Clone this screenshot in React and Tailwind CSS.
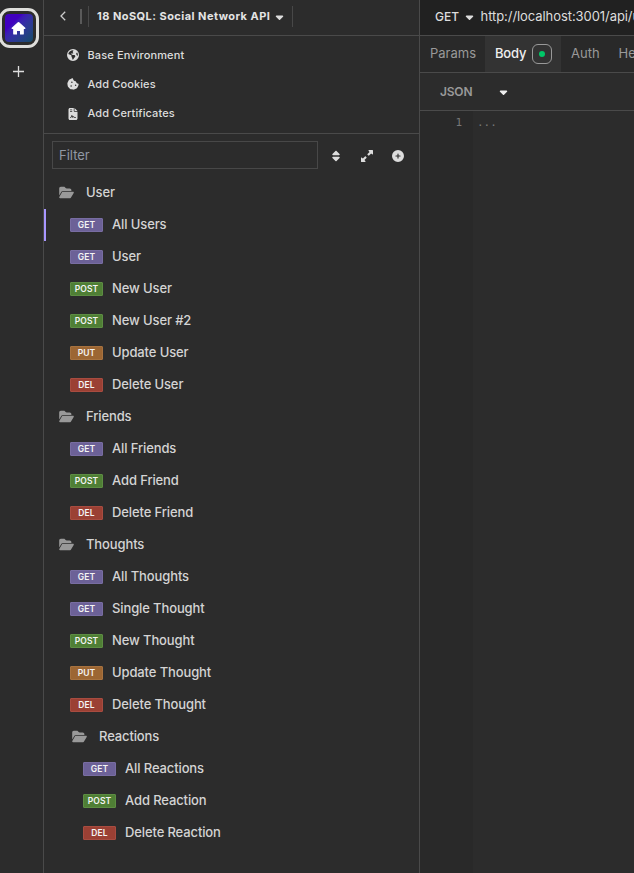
import React from "react";
import {
  FaCaretDown,
  FaCirclePlus,
  FaCookieBite,
  FaEarthAmericas,
  FaFileContract,
  FaFolderOpen,
  FaSort,
  FaUpRightAndDownLeftFromCenter,
} from "react-icons/fa6";

const METHODS = {
  GET: "bg-[#6c6197] border-[#786da2]",
  POST: "bg-[#4f7f35] border-[#5d8d43]",
  PUT: "bg-[#9c6633] border-[#a7723f]",
  DEL: "bg-[#9b4034] border-[#a84c40]",
};

const ITEMS = [
  { folder: "User" },
  { method: "GET", name: "All Users", active: true },
  { method: "GET", name: "User" },
  { method: "POST", name: "New User" },
  { method: "POST", name: "New User #2" },
  { method: "PUT", name: "Update User" },
  { method: "DEL", name: "Delete User" },
  { folder: "Friends" },
  { method: "GET", name: "All Friends" },
  { method: "POST", name: "Add Friend" },
  { method: "DEL", name: "Delete Friend" },
  { folder: "Thoughts" },
  { method: "GET", name: "All Thoughts" },
  { method: "GET", name: "Single Thought" },
  { method: "POST", name: "New Thought" },
  { method: "PUT", name: "Update Thought" },
  { method: "DEL", name: "Delete Thought" },
  { folder: "Reactions", nested: true },
  { method: "GET", name: "All Reactions", nested: true },
  { method: "POST", name: "Add Reaction", nested: true },
  { method: "DEL", name: "Delete Reaction", nested: true },
];

function Row({ item }) {
  const indent = item.nested ? "pl-[13px]" : "pl-0";
  return (
    <li
      className={`flex h-8 items-center border-l-2 ${indent} ${
        item.active ? "border-[#a896ff]" : "border-transparent"
      }`}
    >
      {item.folder ? (
        <>
          <FaFolderOpen className="mb-px ml-[13px] h-[13px] w-[15px] text-[#999]" />
          <span className="ml-3">{item.folder}</span>
        </>
      ) : (
        <>
          <span
            className={`ml-6 flex h-[14px] w-[33px] items-center justify-center rounded-[1px] border text-[8.5px] font-semibold tracking-[0.1px] text-[#f4f4f4] ${METHODS[item.method]}`}
          >
            {item.method}
          </span>
          <span className="ml-[9px]">{item.name}</span>
        </>
      )}
    </li>
  );
}

function Rail() {
  return (
    <nav className="flex w-11 shrink-0 flex-col items-start border-r border-[#4a4a4a]">
      <div className="-ml-px mt-2 flex h-10 w-10 items-center justify-center rounded-[11px] border-[3px] border-[#dededb]">
        <div className="mr-px flex h-7 w-7 items-center justify-center rounded-[4px] bg-linear-to-br from-[#4000bf] from-30% to-[#154b66]">
          <svg viewBox="0 0 16 16" className="mr-px h-[15px] w-[15px]" fill="#fff">
            <path d="M7.3 1.4a1 1 0 0 1 1.4 0l6.5 5.8c.6.5.2 1.3-.5 1.3h-1v5c0 .6-.4 1-1 1H9.6v-3.8H6.4v3.8H3.3c-.6 0-1-.4-1-1v-5h-1C.6 8.500.2 7.700.8 7.200z" />
          </svg>
        </div>
      </div>
      <svg viewBox="0 0 11 11" className="ml-[13px] mt-[18px] h-[11px] w-[11px]" stroke="#ddd" strokeWidth="1.3">
        <path d="M5.500 0v11M0 5.500h11" />
      </svg>
    </nav>
  );
}

function Sidebar() {
  return (
    <aside className="flex w-[376px] shrink-0 flex-col border-r border-[#4a4a4a]">
      <header className="flex h-9 shrink-0 items-center border-b border-[#4a4a4a] pb-[3px]">
        <svg viewBox="0 0 6 10" className="ml-4 h-[10px] w-[6px]" fill="none" stroke="#ccc" strokeWidth="1.3">
          <path d="M5.200.8 1 5l4.200 4.200" />
        </svg>
        <span className="ml-[14px] h-[15px] w-[2px] bg-[#5a5a5a]" />
        <div className="ml-[6px] flex h-[21px] items-center border-x border-[#484848] pl-2 pr-[8px]">
          <span className="w-[173px] whitespace-nowrap text-[11px] font-bold tracking-[0.46px] text-[#e4e4e4]">
            18 NoSQL: Social Network API
          </span>
          <FaCaretDown className="ml-[5px] mt-0.5 h-3 w-[9px]" />
        </div>
      </header>
      <section className="flex h-[98px] shrink-0 flex-col border-b border-[#4a4a4a] pt-[5px] text-[11px] font-medium tracking-[0.12px]">
        <div className="flex h-[29px] items-center pl-[23px]">
          <FaEarthAmericas className="mb-px h-3 w-3" />
          <span className="ml-[8.500px]">Base Environment</span>
        </div>
        <div className="flex h-[29px] items-center pl-[23px]">
          <FaCookieBite className="mb-px h-3 w-3" />
          <span className="ml-[8.500px]">Add Cookies</span>
        </div>
        <div className="flex h-[29px] items-center pl-[23px]">
          <FaFileContract className="h-3 w-3" />
          <span className="ml-[8.500px]">Add Certificates</span>
        </div>
      </section>
      <div className="flex h-[43px] shrink-0 items-center pb-px pl-2">
        <div className="flex h-7 w-[266px] items-center border border-[#484848] pl-[6px] pt-[2px] text-[13px] text-[#9198a4]">
          Filter
        </div>
        <FaSort className="ml-[11.500px] mt-px h-3 w-3" />
        <FaUpRightAndDownLeftFromCenter className="ml-[19px] mt-px h-3 w-3" />
        <FaCirclePlus className="ml-[19px] mt-px h-3 w-3" />
      </div>
      <ul className="text-[13px] font-medium tracking-[-0.12px] text-[#d4d4d4]">
        {ITEMS.map((item, i) => (
          <Row key={i} item={item} />
        ))}
      </ul>
    </aside>
  );
}

function RequestPane() {
  return (
    <main className="flex min-w-0 flex-1 flex-col overflow-hidden whitespace-nowrap text-[13px]">
      <div className="flex h-9 shrink-0 items-center border-b border-[#4a4a4a] bg-[#212121] pb-[2px] pl-[15px]">
        <span className="w-[25px] text-[12px] font-medium">GET</span>
        <FaCaretDown className="ml-[6px] h-3 w-[9px] shrink-0" />
        <span className="ml-[6.500px] tracking-[-0.07px]">http://localhost:3001/api/users</span>
      </div>
      <div className="flex h-[37px] shrink-0 border-b border-[#4a4a4a] bg-[#292929] text-[#999]">
        <div className="flex w-[65px] shrink-0 items-center pl-[10px]">Params</div>
        <div className="flex w-[76px] shrink-0 items-center bg-[#333] pl-[10px] font-medium tracking-[-0.2px] text-[#eee]">
          <span className="w-[30px]">Body</span>
          <span className="ml-[7px] flex h-5 w-5 items-center justify-center rounded-[6px] border border-[#999]">
            <span className="h-[6px] w-[6px] rounded-full bg-[#00c868]" />
          </span>
        </div>
        <div className="flex items-center pl-[10px]">Auth</div>
        <div className="flex items-center pl-[19px]">Headers</div>
      </div>
      <div className="flex h-[38px] shrink-0 items-center border-b border-[#4a4a4a] pl-5 text-[12px] font-semibold text-[#999]">
        <span className="w-[59px] tracking-[-0.2px]">JSON</span>
        <FaCaretDown className="mt-px h-3 w-[9px] text-[#eee]" />
      </div>
      <div className="flex flex-1 font-['DejaVu_Sans_Mono',monospace] text-[11px] leading-6 text-[#777]">
        <div className="w-[53px] bg-[#292929] pr-[11px] text-right">1</div>
        <div className="pl-1">...</div>
      </div>
    </main>
  );
}

export default function App() {
  return (
    <div className="flex h-[873px] w-[634px] overflow-hidden bg-[#2c2c2c] font-['Inter',sans-serif] text-[#ddd]">
      <Rail />
      <Sidebar />
      <RequestPane />
    </div>
  );
}
